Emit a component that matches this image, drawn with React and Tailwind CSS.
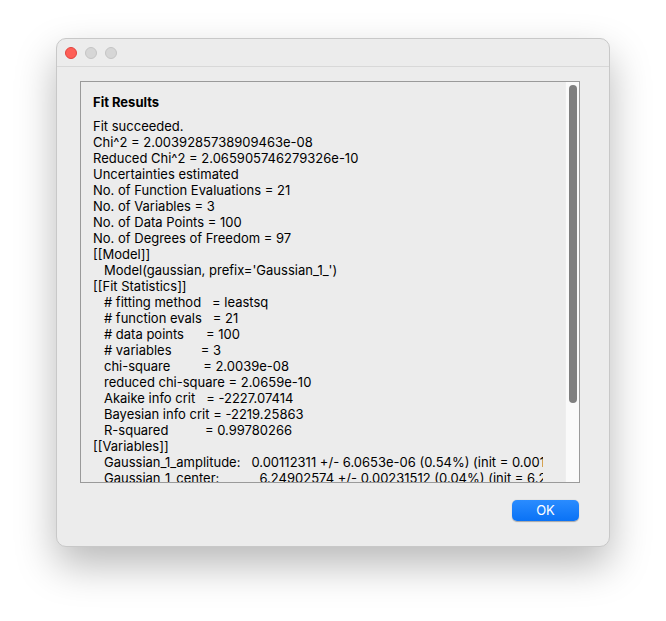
import React from 'react';

const LINES = [
  'Fit succeeded.',
  'Chi^2 = 2.0039285738909463e-08',
  'Reduced Chi^2 = 2.065905746279326e-10',
  'Uncertainties estimated',
  'No. of Function Evaluations = 21',
  'No. of Variables = 3',
  'No. of Data Points = 100',
  'No. of Degrees of Freedom = 97',
  '[[Model]]',
  "   Model(gaussian, prefix='Gaussian_1_')",
  '[[Fit Statistics]]',
  '   # fitting method   = leastsq',
  '   # function evals   = 21',
  '   # data points      = 100',
  '   # variables        = 3',
  '   chi-square         = 2.0039e-08',
  '   reduced chi-square = 2.0659e-10',
  '   Akaike info crit   = -2227.07414',
  '   Bayesian info crit = -2219.25863',
  '   R-squared          = 0.99780266',
  '[[Variables]]',
  '   Gaussian_1_amplitude:   0.00112311 +/- 6.0653e-06 (0.54%) (init = 0.0014)',
  '   Gaussian_1_center:           6.24902574 +/- 0.00231512 (0.04%) (init = 6.2216)',
];

export default function App() {
  return (
    <div className="w-[666px] h-[621px] bg-white relative font-['Inter','Liberation_Sans',sans-serif]">
      <div className="absolute left-[56px] top-[38px] w-[554px] h-[509px] bg-[#ececec] rounded-[10px] border border-[#c8c8c8] shadow-[0_18px_40px_rgba(0,0,0,0.28)] flex flex-col overflow-hidden">
        {/* title bar */}
        <div className="h-[28px] flex items-center gap-[8px] pl-[8px] border-b border-[#d8d8d8] shrink-0">
          <span className="w-[12px] h-[12px] rounded-full bg-[#fe5f57] border border-[#e0443e]" />
          <span className="w-[12px] h-[12px] rounded-full bg-[#d6d6d6] border border-[#c4c4c4]" />
          <span className="w-[12px] h-[12px] rounded-full bg-[#d6d6d6] border border-[#c4c4c4]" />
        </div>

        {/* text area */}
        <div className="ml-[23px] mr-[29px] mt-[14px] h-[402px] border border-[#9a9a9a] bg-[#ececec] flex">
          <div className="w-[462px] overflow-hidden pl-[12px] pt-[12px]">
            <div className="text-[13px] leading-[16px] font-bold text-black">Fit Results</div>
            <div className="mt-[8px] text-[13px] leading-[16px] text-black whitespace-pre">
              {LINES.map((l, i) => (
                <div key={i}>{l}</div>
              ))}
            </div>
          </div>
          <div className="flex-1" />
          <div className="w-[14px] bg-[#fafafa] border-l border-[#eeeeee] flex justify-center pt-[3px]">
            <div className="w-[8px] h-[318px] rounded-full bg-[#7f7f7f]" />
          </div>
        </div>

        <div className="flex justify-end pr-[30px] mt-[17px]">
          <button className="w-[67px] h-[21px] rounded-[5px] bg-[linear-gradient(#2a8cff,#0a72f5)] text-white text-[13px] leading-[21px] shadow-[0_0.5px_1px_rgba(0,0,0,0.3)]">
            OK
          </button>
        </div>
      </div>
    </div>
  );
}
